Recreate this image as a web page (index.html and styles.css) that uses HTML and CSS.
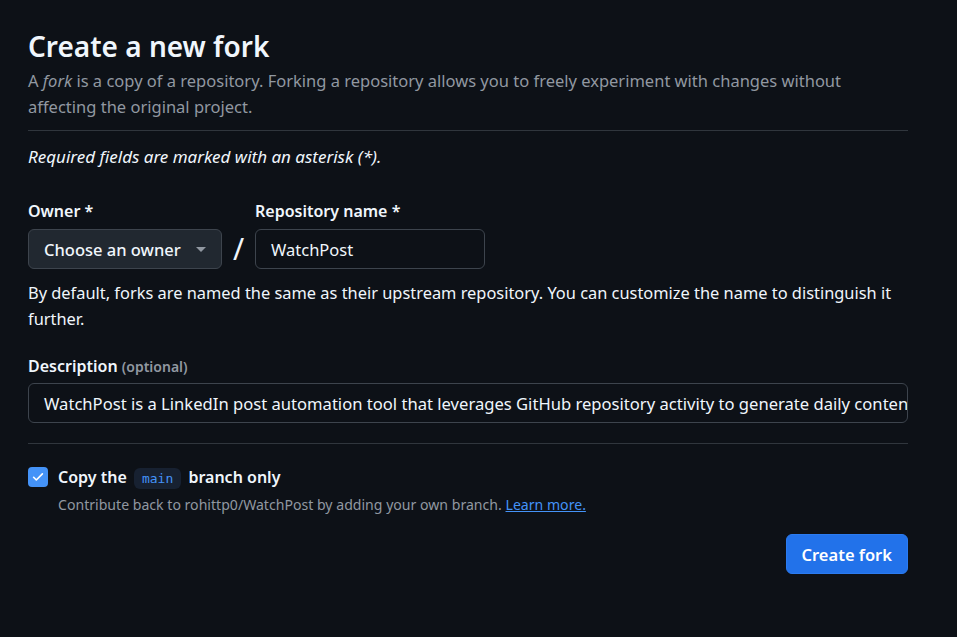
FILE: index.html
```html
<!DOCTYPE html>
<html lang="en">
<head>
<meta charset="utf-8">
<title>Create a new fork</title>
<link rel="stylesheet" href="styles.css">
</head>
<body>
<main class="page">
  <header class="subhead">
    <h1 class="title">Create a new fork</h1>
    <p class="lead">A <em>fork</em> is a copy of a repository. Forking a repository allows you to freely experiment with changes without affecting the original project.</p>
  </header>
  <p class="required">Required fields are marked with an asterisk (*).</p>

  <div class="name-row">
    <div class="field">
      <label class="label">Owner *</label>
      <button class="select" type="button">
        <span>Choose an owner</span>
        <span class="caret"></span>
      </button>
    </div>
    <span class="slash">/</span>
    <div class="field">
      <label class="label">Repository name *</label>
      <div class="input name-input">WatchPost</div>
    </div>
  </div>
  <p class="help">By default, forks are named the same as their upstream repository. You can customize the name to distinguish it further.</p>

  <div class="field desc-field">
    <label class="label">Description <span class="optional">(optional)</span></label>
    <div class="input desc-input">WatchPost is a LinkedIn post automation tool that leverages GitHub repository activity to generate daily content</div>
  </div>

  <div class="copy">
    <div class="copy-row">
      <span class="checkbox">
        <svg viewBox="0 0 16 16" width="14" height="14"><path d="M3 8.3l3.1 3.1L13 4.5" fill="none" stroke="#fff" stroke-width="1.9" stroke-linecap="round" stroke-linejoin="round"/></svg>
      </span>
      <span class="copy-label">Copy the <code class="branch">main</code> branch only</span>
    </div>
    <p class="copy-note">Contribute back to rohittp0/WatchPost by adding your own branch. <a href="#" class="link">Learn more.</a></p>
  </div>

  <div class="actions">
    <button class="btn-primary" type="button">Create fork</button>
  </div>
</main>
</body>
</html>
```

FILE: styles.css
```css
* { box-sizing: border-box; }
html, body { margin: 0; padding: 0; }
body {
  background: #0d1117;
  color: #f0f6fc;
  font-family: "Noto Sans", "Open Sans", sans-serif;
  font-size: 16px;
  width: 957px;
  height: 637px;
  overflow: hidden;
}
.page {
  width: 880px;
  margin-left: 28px;
  padding-top: 28px;
}
.subhead {
  border-bottom: 1px solid #30363d;
  padding-bottom: 10px;
}
.title {
  margin: 0;
  font-size: 28px;
  line-height: 36px;
  font-weight: 600;
  color: #f0f6fc;
}
.lead {
  margin: 4px 0 0;
  font-size: 16.5px;
  line-height: 26px;
  color: #9198a1;
}
.required {
  margin: 14px 0 0;
  font-style: italic;
  font-size: 17px;
  line-height: 24px;
}
.name-row {
  display: flex;
  align-items: flex-end;
  margin-top: 30px;
}
.field { display: flex; flex-direction: column; }
.label {
  font-weight: 600;
  font-size: 16px;
  line-height: 24px;
  margin-bottom: 6px;
}
.select {
  width: 194px;
  height: 40px;
  background: #212830;
  border: 1px solid #3d444d;
  border-radius: 6px;
  color: #f0f6fc;
  font: inherit;
  font-size: 16.5px;
  font-weight: 500;
  display: flex;
  align-items: center;
  justify-content: space-between;
  padding: 0 15px 0 15px;
}
.caret {
  width: 0; height: 0;
  border-left: 5px solid transparent;
  border-right: 5px solid transparent;
  border-top: 5px solid #9198a1;
}
.slash {
  width: 33px;
  text-align: center;
  font-size: 30px;
  font-weight: 400;
  line-height: 40px;
  height: 40px;
}
.input {
  height: 40px;
  border: 1px solid #3d444d;
  border-radius: 6px;
  background: #0d1117;
  padding: 0 15px;
  display: flex;
  align-items: center;
  font-size: 16.5px;
  white-space: nowrap;
  overflow: hidden;
}
.name-input { width: 230px; }
.help {
  margin: 11px 0 0;
  font-size: 16.4px;
  line-height: 26px;
}
.desc-field { margin-top: 22px; }
.desc-field .label { margin-bottom: 4px; }
.optional {
  font-size: 14px;
  color: #9198a1;
}
.desc-input { width: 880px; font-size: 16.6px; }
.copy {
  margin-top: 20px;
  border-top: 1px solid #30363d;
  padding-top: 19px;
}
.copy-row { display: flex; align-items: center; gap: 10px; }
.checkbox {
  width: 20px; height: 20px;
  border-radius: 4px;
  background: #4493f8;
  display: flex; align-items: center; justify-content: center;
}
.copy-label {
  font-weight: 600;
  font-size: 16px;
  line-height: 24px;
  padding-top: 2px;
}
.branch {
  font-family: "DejaVu Sans Mono", "Liberation Mono", monospace;
  font-weight: 400;
  font-size: 13px;
  color: #4493f8;
  background: #172131;
  border-radius: 6px;
  padding: 3px 8px;
  margin: 0 3px;
}
.copy-note {
  margin: 4px 0 0 30px;
  font-size: 14.1px;
  line-height: 20px;
  color: #9198a1;
}
.link { color: #4493f8; text-decoration: underline; }
.actions {
  display: flex;
  justify-content: flex-end;
  margin-top: 19px;
}
.btn-primary {
  height: 40px;
  padding: 0 15px;
  background: #2272ea;
  border: 1px solid #2b7bf0;
  border-radius: 6px;
  color: #fff;
  font: inherit;
  font-size: 16.5px;
  font-weight: 600;
}
```
